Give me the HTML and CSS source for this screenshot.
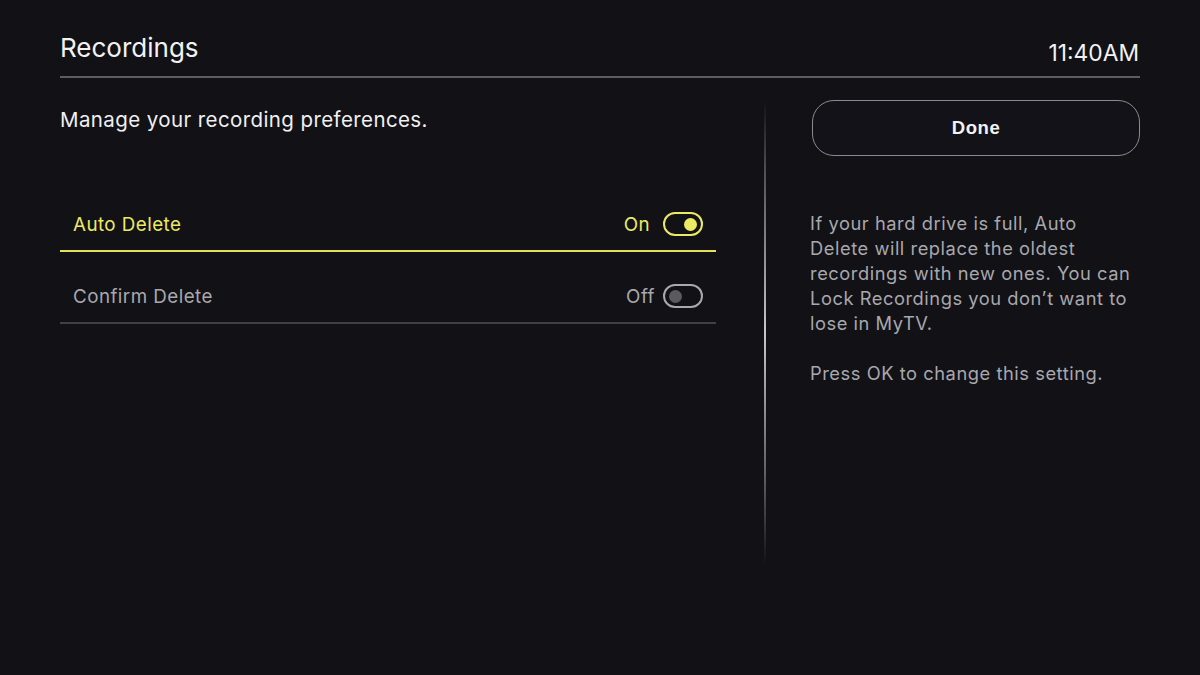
FILE: index.html
```html
<!DOCTYPE html>
<html>
<head>
<meta charset="utf-8">
<link rel="stylesheet" href="styles.css">
</head>
<body>
<div class="screen">
  <header class="header">
    <h1 class="title">Recordings</h1>
    <div class="clock">11:40AM</div>
  </header>
  <main class="content">
    <section class="left">
      <p class="intro">Manage your recording preferences.</p>
      <ul class="list">
        <li class="row focused">
          <span class="label">Auto Delete</span>
          <span class="state">On</span>
          <span class="toggle on"><span class="knob"></span></span>
        </li>
        <li class="row">
          <span class="label">Confirm Delete</span>
          <span class="state off">Off</span>
          <span class="toggle"><span class="knob"></span></span>
        </li>
      </ul>
    </section>
    <div class="divider"></div>
    <aside class="right">
      <button class="done">Done</button>
      <p class="help">If your hard drive is full, Auto Delete will replace the oldest recordings with new ones. You can Lock Recordings you don’t want to lose in MyTV.</p>
      <p class="help">Press OK to change this setting.</p>
    </aside>
  </main>
</div>
</body>
</html>
```
FILE: styles.css
```css
* { box-sizing: border-box; }
html, body { margin: 0; padding: 0; }
body {
  width: 1200px;
  height: 675px;
  background: #111116;
  color: #f0f0f0;
  font-family: "Inter", "Noto Sans", sans-serif;
  overflow: hidden;
}
.screen {
  padding: 0 60px;
}
.header {
  display: flex;
  justify-content: space-between;
  align-items: flex-end;
  height: 78px;
  border-bottom: 2px solid #5c5c62;
  padding-bottom: 8px;
}
.title {
  margin: 0;
  font-size: 26px;
  font-weight: 400;
  line-height: 32px;
  color: #f2f2f2;
  position: relative;
  top: -4px;
}
.clock {
  font-size: 22.8px;
  line-height: 30px;
  color: #f2f2f2;
  margin-right: 1px;
}
.content {
  display: flex;
  padding-top: 22px;
}
.left {
  width: 656px;
}
.intro {
  margin: 0;
  font-size: 20.5px;
  line-height: 40px;
  color: #f0f0f0;
  letter-spacing: 0.4px;
}
.list {
  list-style: none;
  margin: 40px 0 0 0;
  padding: 0;
}
.row {
  display: flex;
  align-items: center;
  height: 72px;
  padding: 18px 13px 0 13px;
  border-bottom: 2px solid #404046;
  color: #a8a8ad;
  font-size: 18.8px;
  letter-spacing: 0.45px;
}
.row.focused {
  color: #ecea62;
  border-bottom-color: #e3e15a;
}
.label { flex: 1; }
.state { margin-right: 13px; }
.state.off { margin-right: 8px; }
.toggle {
  width: 40px;
  height: 24px;
  border: 2px solid #a8a8ad;
  border-radius: 12px;
  display: flex;
  align-items: center;
  padding: 0 4px;
}
.toggle .knob {
  width: 13px;
  height: 13px;
  border-radius: 50%;
  background: #5a5a60;
}
.toggle.on {
  border-color: #ecea62;
  justify-content: flex-end;
}
.toggle.on .knob { background: #ecea62; }
.divider {
  width: 2px;
  height: 465px;
  margin: 0 44px 0 48px;
  background: linear-gradient(to bottom, rgba(160,160,165,0) 0%, rgba(120,120,125,0.6) 15%, #c8c8cc 50%, rgba(120,120,125,0.6) 85%, rgba(160,160,165,0) 100%);
}
.right {
  flex: 1;
}
.done {
  display: block;
  width: 328px;
  height: 56px;
  margin-left: 2px;
  border: 1px solid #8a8a90;
  border-radius: 22px;
  background: #121218;
  color: #f2f2f2;
  font-family: "Liberation Sans", Arial, sans-serif;
  font-weight: 700;
  font-size: 18.5px;
  letter-spacing: 0.6px;
}
.help {
  margin: 0;
  font-size: 18.3px;
  line-height: 25px;
  color: #a8a8ad;
  letter-spacing: 0.55px;
  width: 330px;
}
.help:first-of-type { margin-top: 55px; }
.help + .help { margin-top: 25px; }
```
